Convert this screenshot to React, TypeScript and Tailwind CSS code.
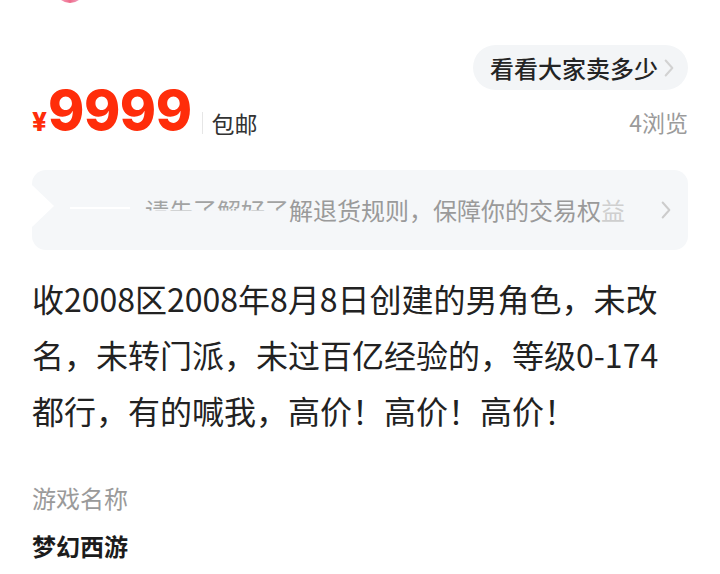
const cjk = "font-['Noto_Sans_CJK_SC','Noto_Sans',sans-serif]";

function Chevron({ className }: { className?: string }) {
  return (
    <svg viewBox="0 0 12 22" className={className} fill="none" stroke="currentColor" strokeWidth="2.4" strokeLinecap="round" strokeLinejoin="round">
      <path d="M2 2l8 9-8 9" />
    </svg>
  );
}

export default function App() {
  return (
    <div className={`w-[720px] h-[574px] overflow-hidden bg-white ${cjk}`}>
      {/* bottom edge of avatar above */}
      <div className="h-[4px] overflow-hidden pl-[55px]">
        <div className="w-[30px] h-[30px] -mt-[27px] rounded-full bg-gradient-to-r from-[#f7b9d6] via-[#ee6a8a] to-[#e8c2e8]" />
      </div>

      <div className="px-[32px]">
        <div className="flex justify-end mt-[41px]">
          <div className="flex items-center h-[45px] pl-[17px] pr-[14px] rounded-full bg-[#f3f5f7]">
            <span className="text-[24px] leading-none font-medium text-[#242424]">看看大家卖多少</span>
            <Chevron className="w-[10px] h-[20px] ml-[6px] text-[#d2d2d2]" />
          </div>
        </div>

        <div className="flex items-end justify-between h-[47px]">
          <div className="flex items-end">
            <span className="font-['Inter',sans-serif] font-extrabold text-[#ff2d0a] text-[26px] leading-none mb-[2px]">¥</span>
            <span className="font-['Inter',sans-serif] font-extrabold text-[#ff2d0a] text-[55px] leading-none tracking-[-0.5px] ml-[1px] -mb-[1px]">9999</span>
            <span className="w-px h-[22px] bg-[#e6e6e6] ml-[10px] mb-[3px]" />
            <span className="text-[23px] leading-none text-[#333] ml-[9px] mb-[2px]">包邮</span>
          </div>
          <span className="text-[23px] leading-none text-[#9b9b9b] mb-[3px]">4浏览</span>
        </div>

        <div className="relative mt-[33px] h-[80px] rounded-[14px] bg-[#f5f7f9] flex items-center overflow-hidden">
          <svg viewBox="0 0 22 42" className="absolute left-0 top-[15px] w-[22px] h-[42px]">
            <path d="M0 0L22 21L0 42Z" fill="#ffffff" />
          </svg>
          <div className="absolute left-[38px] top-[37px] w-[60px] h-[2px] bg-white" />
          <span className="ml-[113px] text-[24px] leading-none text-[#8e8e8e] [clip-path:inset(10%_0_48%_0)] opacity-80">请先了解好了</span>
          <span className="text-[24px] leading-none text-[#9a9a9a]">解退货规则，保障你的交易权<span className="text-[#cfcfcf]">益</span></span>
          <Chevron className="w-[10px] h-[20px] ml-[36px] text-[#cccccc]" />
        </div>

        <p className="mt-[20px] text-[32px] leading-[56px] text-[#222]">
          收2008区2008年8月8日创建的男角色，未改
          <br />
          名，未转门派，未过百亿经验的，等级0-174
          <br />
          都行，有的喊我，高价！高价！高价！
        </p>

        <div className="mt-[44px] text-[24px] leading-[32px] text-[#9a9a9a]">游戏名称</div>
        <div className="mt-[16px] text-[24px] leading-[32px] font-bold text-[#1c1c1c]">梦幻西游</div>
      </div>
    </div>
  );
}
